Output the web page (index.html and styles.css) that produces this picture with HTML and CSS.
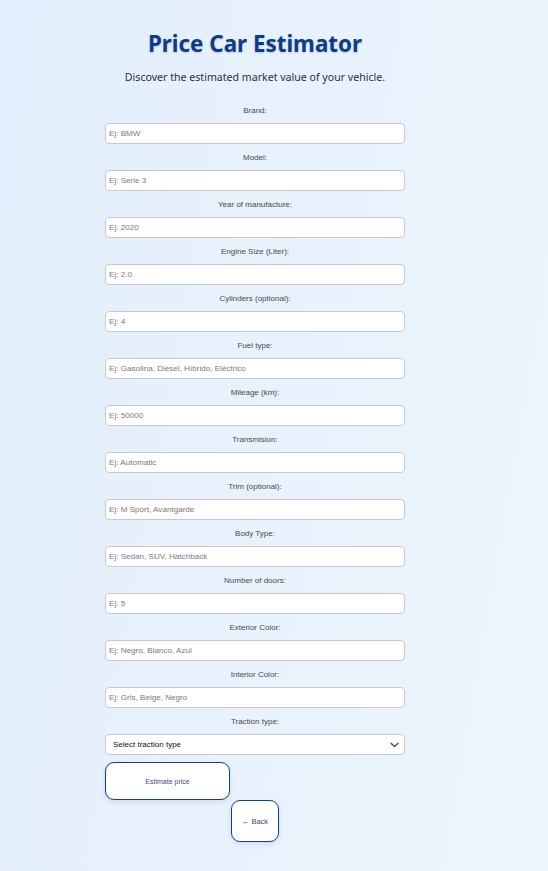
FILE: index.html
```html
<!DOCTYPE html>
<html lang="en">
<head>
<meta charset="utf-8">
<title>Price Car Estimator</title>
<link rel="stylesheet" href="styles.css">
</head>
<body>
<main class="page">
  <h1 class="title">Price Car Estimator</h1>
  <p class="subtitle">Discover the estimated market value of your vehicle.</p>
  <form class="form">
    <label class="label">Brand:</label>
    <input class="field" placeholder="Ej: BMW">
    <label class="label">Model:</label>
    <input class="field" placeholder="Ej: Serie 3">
    <label class="label">Year of manufacture:</label>
    <input class="field" placeholder="Ej: 2020">
    <label class="label">Engine Size (Liter):</label>
    <input class="field" placeholder="Ej: 2.0">
    <label class="label">Cylinders (optional):</label>
    <input class="field" placeholder="Ej: 4">
    <label class="label">Fuel type:</label>
    <input class="field" placeholder="Ej: Gasolina, Diésel, Híbrido, Eléctrico">
    <label class="label">Mileage (km):</label>
    <input class="field" placeholder="Ej: 50000">
    <label class="label">Transmision:</label>
    <input class="field" placeholder="Ej: Automatic">
    <label class="label">Trim (optional):</label>
    <input class="field" placeholder="Ej: M Sport, Avantgarde">
    <label class="label">Body Type:</label>
    <input class="field" placeholder="Ej: Sedan, SUV, Hatchback">
    <label class="label">Number of doors:</label>
    <input class="field" placeholder="Ej: 5">
    <label class="label">Exterior Color:</label>
    <input class="field" placeholder="Ej: Negro, Blanco, Azul">
    <label class="label">Interior Color:</label>
    <input class="field" placeholder="Ej: Gris, Beige, Negro">
    <label class="label">Traction type:</label>
    <div class="select-wrap">
      <div class="select">Select traction type</div>
      <svg class="chevron" width="9" height="6" viewBox="0 0 9 6"><path d="M1 1.2 L4.5 4.6 L8 1.2" fill="none" stroke="#555" stroke-width="1.4" stroke-linecap="round" stroke-linejoin="round"/></svg>
    </div>
    <div class="actions">
      <button type="button" class="btn btn-estimate">Estimate price</button>
      <button type="button" class="btn btn-back">← Back</button>
    </div>
  </form>
</main>
</body>
</html>
```

FILE: styles.css
```css
html, body {
  margin: 0;
  padding: 0;
}
body {
  min-height: 871px;
  background: linear-gradient(100deg, #e2eefb 0%, #e7f2fc 50%, #edf5fd 100%);
  font-family: "Liberation Sans", Arial, sans-serif;
}
.page {
  width: 300px;
  margin-left: 105px;
  padding-top: 29px;
  display: flex;
  flex-direction: column;
  align-items: center;
}
.title {
  margin: 0;
  font-family: "Noto Sans", sans-serif;
  font-weight: 700;
  font-size: 22.4px;
  line-height: 30px;
  color: #0f3a8a;
  text-shadow: 0 1px 2px rgba(15, 58, 138, 0.2);
}
.subtitle {
  margin: 10px 0 0;
  font-family: "Noto Sans", sans-serif;
  font-size: 10.6px;
  line-height: 16px;
  color: #2a2f38;
  white-space: nowrap;
}
.form {
  width: 300px;
  margin-top: 21px;
  display: flex;
  flex-direction: column;
}
.label {
  display: block;
  text-align: center;
  font-size: 8px;
  line-height: 10px;
  height: 10px;
  color: #4a4a4a;
  margin-bottom: 7px;
}
.field, .select-wrap {
  box-sizing: border-box;
  width: 300px;
  height: 21px;
  margin: 0 0 9px;
  border: 1px solid #c9c9c9;
  border-radius: 4px;
  background: #fff;
  padding: 0 3px;
  font-family: "Liberation Sans", Arial, sans-serif;
  font-size: 8.1px;
  color: #333;
  outline: none;
}
.field::placeholder {
  color: #7a7a7a;
}
.select-wrap {
  display: flex;
  align-items: center;
  justify-content: space-between;
  padding: 0 5px 0 7px;
  margin-bottom: 7px;
}
.select {
  font-size: 8px;
  color: #111;
}
.chevron {
  display: block;
}
.actions {
  display: flex;
  flex-direction: column;
  align-items: flex-start;
}
.btn {
  box-sizing: border-box;
  background: #fff;
  border: 1.5px solid #143d8c;
  font-family: "Liberation Sans", Arial, sans-serif;
  font-size: 7px;
  color: #3a4a7a;
  cursor: pointer;
  padding: 0;
  box-shadow: 0 2px 5px rgba(20, 61, 140, 0.12);
}
.btn-estimate {
  width: 125px;
  height: 38px;
  border-radius: 9px;
}
.btn-back {
  width: 48px;
  height: 42px;
  border-radius: 9px;
  margin-left: 126px;
  font-size: 7.5px;
}
```
